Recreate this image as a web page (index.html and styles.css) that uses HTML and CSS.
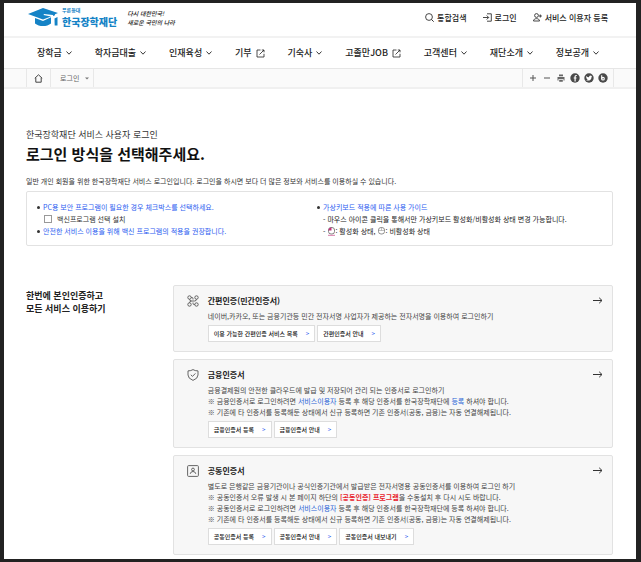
FILE: index.html
```html
<!DOCTYPE html>
<html lang="ko">
<head>
    <meta charset="UTF-8">
    <meta name="viewport" content="width=device-width, initial-scale=1">
    <title>로그인 - 한국장학재단</title>
    <link rel="stylesheet" href="styles.css">
</head>
<body>

<svg class="symbols" width="0" height="0" aria-hidden="true">
    <symbol id="chevron" viewBox="0 0 6 4"><path d="M.5 .5 3 3.200 5.500 .5" fill="none" stroke="currentColor" stroke-width=".9"/></symbol>
    <symbol id="external" viewBox="0 0 9 9"><path d="M4.500 1H1v7h7V4.800M5.800 1H8v2.300M8 1 3.500 5.500" fill="none" stroke="currentColor" stroke-width=".8"/></symbol>
    <symbol id="arrow" viewBox="0 0 10 7"><path d="M0 3.500h8.800M6.200 .8 9 3.500 6.200 6.200" fill="none" stroke="currentColor"/></symbol>
</svg>

<header class="header">
    <a class="logo" href="#">
        <svg width="32" height="19" viewBox="0 0 32 19" aria-hidden="true">
            <path d="M0 6 15 0l15 5-3 1.300v1L25 8V7l-9-1-.5 1L23 8.500 15 11.500z" fill="#1583c6"/>
            <path d="M7 10v5.500c4 3.400 12 3.400 16 0V9.300L15 13z" fill="#1583c6"/>
            <path d="M26.500 10.500 29.500 9v8.500h-2.800z" fill="#1583c6"/>
        </svg>
        <span class="logo-text"><small>푸른등대</small><strong>한국장학재단</strong></span>
    </a>
    <p class="slogan">다시 대한민국!<br>새로운 국민의 나라</p>
    <div class="util">
        <button type="button">
            <svg width="9" height="9" viewBox="0 0 9 9" aria-hidden="true"><circle cx="4" cy="4" r="3.400" fill="none" stroke="#333" stroke-width=".9"/><path d="m6.500 6.500 2.200 2.200" stroke="#333"/></svg>
            통합검색
        </button>
        <a href="#">
            <svg width="9" height="9" viewBox="0 0 9 9" aria-hidden="true"><path d="M4 .8h4.300v7.400H4M0 4.500h5.600M3.700 2.500l2 2-2 2" fill="none" stroke="#333" stroke-width=".9"/></svg>
            로그인
        </a>
        <a href="#">
            <svg width="9" height="9" viewBox="0 0 9 9" aria-hidden="true"><circle cx="3.500" cy="2.500" r="1.900" fill="none" stroke="#333" stroke-width=".9"/><path d="M.5 8C.5 4.800 6.500 4.800 6.500 8zM7.300 1.500v3M5.900 3h3" fill="none" stroke="#333" stroke-width=".9"/></svg>
            서비스 이용자 등록
        </a>
    </div>
</header>

<nav class="gnb">
    <button type="button">장학금 <svg class="chevron"><use href="#chevron"/></svg></button>
    <button type="button">학자금대출 <svg class="chevron"><use href="#chevron"/></svg></button>
    <button type="button">인재육성 <svg class="chevron"><use href="#chevron"/></svg></button>
    <a href="#">기부 <svg class="external"><use href="#external"/></svg></a>
    <button type="button">기숙사 <svg class="chevron"><use href="#chevron"/></svg></button>
    <a href="#">고졸만JOB <svg class="external"><use href="#external"/></svg></a>
    <button type="button">고객센터 <svg class="chevron"><use href="#chevron"/></svg></button>
    <button type="button">재단소개 <svg class="chevron"><use href="#chevron"/></svg></button>
    <button type="button">정보공개 <svg class="chevron"><use href="#chevron"/></svg></button>
</nav>

<div class="location">
    <a class="home" href="#" aria-label="홈">
        <svg width="9" height="9" viewBox="0 0 9 9" aria-hidden="true"><path d="M.8 4.300 4.500 .8l3.700 3.500M1.800 3.800v4.400h5.400V3.800" fill="none" stroke="#444"/></svg>
    </a>
    <div class="depth">
        <select aria-label="현재 메뉴"><option>로그인</option></select>
        <svg width="4" height="3" viewBox="0 0 4 3" aria-hidden="true"><path d="M0 .5h4l-2 2z" fill="#777"/></svg>
    </div>
    <div class="tools">
        <button type="button" aria-label="확대"><svg viewBox="0 0 10 10"><path d="M5 2v6M2 5h6" stroke="#555"/></svg></button>
        <button type="button" aria-label="축소"><svg viewBox="0 0 10 10"><path d="M2 5h6" stroke="#555"/></svg></button>
        <button type="button" aria-label="인쇄"><svg viewBox="0 0 10 10"><path d="M3 1.500h4v1.700H3zM1.500 4h7v3.500H7.500V6h-5v1.500h-1zM3.200 6.800h3.600v2H3.200z" fill="#666"/></svg></button>
        <a href="#" aria-label="페이스북"><svg viewBox="0 0 10 10"><circle cx="5" cy="5" r="4.700" fill="#4a4a4a"/><path d="M6.800 2.500H6q-.9 0-.9 1v5M3.700 5h2.800" fill="none" stroke="#fff" stroke-width="1.200"/></svg></a>
        <a href="#" aria-label="트위터"><svg viewBox="0 0 10 10"><circle cx="5" cy="5" r="4.700" fill="#4a4a4a"/><path d="M2.300 3Q3.500 4.300 5 4.200 5 2.500 6.400 2.500q.6 0 1 .4l.8-.2-.6 1C7.600 7.500 4 8.400 2 7q1.200 0 1.700-.6-1-.3-1.200-1.200Q2 4 2.300 3z" fill="#fff"/></svg></a>
        <a href="#" aria-label="블로그"><svg viewBox="0 0 10 10"><circle cx="5" cy="5" r="4.700" fill="#4a4a4a"/><path d="M3.700 2.300v4" stroke="#fff" stroke-width="1.100"/><circle cx="5" cy="5.700" r="1.300" fill="none" stroke="#fff" stroke-width="1.100"/></svg></a>
    </div>
</div>

<main class="content">
    <p class="sub-title">한국장학재단 서비스 사용자 로그인</p>
    <h1>로그인 방식을 선택해주세요.</h1>
    <p class="intro">일반 개인 회원을 위한 한국장학재단 서비스 로그인입니다. 로그인을 하시면 보다 더 많은 정보와 서비스를 이용하실 수 있습니다.</p>

    <div class="guide">
        <ul>
            <li class="dot">PC용 보안 프로그램이 필요한 경우 체크박스를 선택하세요.</li>
            <li class="check"><input type="checkbox" id="vaccine"><label for="vaccine">백신프로그램 선택 설치</label></li>
            <li class="dot">안전한 서비스 이용을 위해 백신 프로그램의 적용을 권장합니다.</li>
        </ul>
        <ul>
            <li class="dot">가상키보드 적용에 따른 사용 가이드</li>
            <li class="dash">- 마우스 아이콘 클릭을 통해서만 가상키보드 활성화/비활성화 상태 변경 가능합니다.</li>
            <li class="dash">-
                <span class="state"><svg class="mouse" viewBox="0 0 7 9" aria-hidden="true"><rect x=".5" y=".5" width="6" height="6.500" rx="2.500" fill="#fff" stroke="#666" stroke-width=".8"/><path d="M3.500 .5v3h-3Q.5 .5 3.500 .5z" fill="#c2347c"/><path d="M0 8.300h7" stroke="#d678a8"/></svg>: 활성화 상태,</span>
                <span class="state"><svg class="mouse" viewBox="0 0 7 9" aria-hidden="true"><rect x=".5" y=".5" width="6" height="6.500" rx="2.500" fill="#fff" stroke="#777" stroke-width=".8"/><path d="M.5 3.500h6M3.500 .5v3" stroke="#999" stroke-width=".6"/></svg>: 비활성화 상태</span>
            </li>
        </ul>
    </div>

    <section class="login">
        <h2>한번에 본인인증하고<br>모든 서비스 이용하기</h2>
        <div class="cards">
            <article class="card">
                <svg class="card-icon" viewBox="0 0 12 12" aria-hidden="true"><g fill="none" stroke="#555" stroke-width=".9"><circle cx="2.500" cy="2.500" r="1.700"/><circle cx="9.500" cy="2.500" r="1.700"/><circle cx="2.500" cy="9.500" r="1.700"/><circle cx="9.500" cy="9.500" r="1.700"/><path d="M4.200 2.500H5q1 0 1 1.200v.8M2.500 4.200Q2.500 6 4.500 6h3q2 0 2-1.800M2.500 7.800Q2.500 6 4.500 6M7.800 9.500H7q-1 0-1-1.200v-.8"/></g></svg>
                <div class="card-body">
                    <h3>간편인증(민간인증서)</h3>
                    <p>네이버,카카오, 또는 금융기관등 민간 전자서명 사업자가 제공하는 전자서명을 이용하여 로그인하기</p>
                    <div class="links">
                        <a href="#">이용 가능한 간편인증 서비스 목록<span>&gt;</span></a>
                        <a href="#">간편인증서 안내<span>&gt;</span></a>
                    </div>
                </div>
                <a class="go" href="#" aria-label="간편인증 로그인"><svg><use href="#arrow"/></svg></a>
            </article>

            <article class="card">
                <svg class="card-icon" viewBox="0 0 12 12" aria-hidden="true"><path d="M6 .6Q8 1.900 11 1.900V6q0 3.500-5 5.400Q1 9.500 1 6V1.900Q4 1.900 6 .6zM3.800 5.800l1.700 1.600 2.900-3" fill="none" stroke="#555" stroke-width=".9"/></svg>
                <div class="card-body">
                    <h3>금융인증서</h3>
                    <p>금융결제원의 안전한 클라우드에 발급 및 저장되어 관리 되는 인증서로 로그인하기</p>
                    <p>※ 금융인증서로 로그인하려면 <a href="#">서비스이용자</a> 등록 후 해당 인증서를 한국장학재단에 <a href="#">등록</a> 하셔야 합니다.</p>
                    <p>※ 기존에 타 인증서를 등록해둔 상태에서 신규 등록하면 기존 인증서(공동, 금융)는 자동 연결해제됩니다.</p>
                    <div class="links">
                        <a href="#">금융인증서 등록<span>&gt;</span></a>
                        <a href="#">금융인증서 안내<span>&gt;</span></a>
                    </div>
                </div>
                <a class="go" href="#" aria-label="금융인증서 로그인"><svg><use href="#arrow"/></svg></a>
            </article>

            <article class="card">
                <svg class="card-icon" viewBox="0 0 12 12" aria-hidden="true"><rect x=".6" y=".6" width="10.800" height="10.800" rx="1" fill="none" stroke="#666"/><circle cx="6" cy="4.500" r="1.400" fill="none" stroke="#555" stroke-width=".9"/><path d="M3.400 9V8.500q.3-2 2.600-2t2.600 2V9" fill="none" stroke="#555" stroke-width=".9"/></svg>
                <div class="card-body">
                    <h3>공동인증서</h3>
                    <p>별도로 은행같은 금융기관이나 공식인증기관에서 발급받은 전자서명용 공동인증서를 이용하여 로그인 하기</p>
                    <p>※ 공동인증서 오류 발생 시 본 페이지 하단의 <strong>[공동인증] 프로그램</strong>을 수동설치 후 다시 시도 바랍니다.</p>
                    <p>※ 공동인증서로 로그인하려면 <a href="#">서비스이용자</a> 등록 후 해당 인증서를 한국장학재단에 등록 하셔야 합니다.</p>
                    <p>※ 기존에 타 인증서를 등록해둔 상태에서 신규 등록하면 기존 인증서(공동, 금융)는 자동 연결해제됩니다.</p>
                    <div class="links">
                        <a href="#">공동인증서 등록<span>&gt;</span></a>
                        <a href="#">공동인증서 안내<span>&gt;</span></a>
                        <a href="#">공동인증서 내보내기<span>&gt;</span></a>
                    </div>
                </div>
                <a class="go" href="#" aria-label="공동인증서 로그인"><svg><use href="#arrow"/></svg></a>
            </article>
        </div>
    </section>
</main>

</body>
</html>
```
FILE: styles.css
```css
* {
    box-sizing: border-box;
}
body {
    margin: 0;
    min-height: 100vh;
    border: solid #222;
    border-width: 3px 5px 3px 4px;
    background-color: #fff;
    color: #333;
    font-family: "Noto Sans CJK KR", sans-serif;
    font-size: 7px;
    line-height: 11px;
}
h1, h2, h3, p, ul {
    margin: 0;
    padding: 0;
}
ul {
    list-style: none;
}
a {
    color: inherit;
    text-decoration: none;
}
button, select {
    margin: 0;
    padding: 0;
    border: 0;
    background: none;
    color: inherit;
    font: inherit;
}
svg {
    display: block;
    flex: none;
}
.symbols {
    position: absolute;
}

/* header */
.header {
    display: flex;
    align-items: center;
    height: 35px;
    padding: 0 28px 4px 24px;
    border-bottom: 2px solid #f2f2f2;
}
.logo {
    display: flex;
    align-items: center;
    gap: 2px;
    color: #1583c6;
}
.logo-text {
    display: flex;
    flex-direction: column;
}
.logo small {
    font-size: 5px;
    font-weight: bold;
    line-height: 8px;
}
.logo strong {
    font-size: 10px;
    font-weight: 900;
    line-height: 15px;
}
.slogan {
    margin-left: 10px;
    color: #222;
    font-size: 6px;
    font-style: italic;
    font-weight: 500;
    line-height: 9px;
}
.util {
    display: flex;
    gap: 16px;
    margin-left: auto;
    color: #222;
    font-size: 8px;
    font-weight: 500;
    line-height: 12px;
}
.util a, .util button {
    display: flex;
    align-items: center;
    gap: 3px;
}

/* main menu */
.gnb {
    display: flex;
    align-items: center;
    justify-content: space-between;
    height: 31px;
    padding: 0 37px 0 33px;
    border-bottom: 1px solid #e6e6e6;
    color: #222;
    font-size: 9px;
    font-weight: 500;
    line-height: 14px;
}
.gnb a, .gnb button {
    display: flex;
    align-items: center;
    gap: 4px;
}
.chevron {
    width: 6px;
    height: 4px;
}
.external {
    width: 9px;
    height: 9px;
}

/* location bar */
.location {
    display: flex;
    height: 20px;
    padding: 0 22px;
    border-bottom: 2px solid #f0f0f0;
    background-color: #fafafa;
}
.home, .depth, .tools {
    display: flex;
    align-items: center;
    border-right: 1px solid #e8e8e8;
}
.home {
    padding: 0 7px;
    border-left: 1px solid #e8e8e8;
}
.depth {
    gap: 5px;
    padding: 0 4px 0 9px;
    color: #666;
}
.depth select {
    appearance: none;
}
.tools {
    gap: 4px;
    margin-left: auto;
    padding: 0 5px;
    border-left: 1px solid #e8e8e8;
}
.tools svg {
    width: 10px;
    height: 10px;
}

/* content */
.content {
    padding: 40px 23px 4px 22px;
}
.sub-title {
    font-size: 9px;
    line-height: 12px;
}
h1 {
    margin-top: 2px;
    color: #111;
    font-size: 15px;
    line-height: 22px;
}
.intro {
    margin-top: 11px;
}
.guide {
    display: grid;
    grid-template-columns: 280px 1fr;
    margin-top: 4px;
    padding: 9px 10px 8px;
    border: 1px solid #e2e2e2;
    border-radius: 2px;
    line-height: 12px;
}
.guide li {
    display: flex;
    align-items: center;
}
.guide .dot {
    gap: 3px;
    color: #2b5cf0;
}
.dot::before {
    content: "";
    width: 3px;
    height: 3px;
    border-radius: 50%;
    background-color: #333;
}
.guide .dash {
    gap: 3px;
    padding-left: 6px;
    color: #222;
}
.guide .check {
    gap: 5px;
    padding-left: 7px;
}
.check input {
    appearance: none;
    width: 8px;
    height: 8px;
    margin: 0;
    border: 1px solid #999;
    background-color: #fff;
}
.check input:checked {
    background-color: #2b5cf0;
}
.state {
    display: flex;
    align-items: center;
}
.mouse {
    width: 7px;
    height: 9px;
}

/* login methods */
.login {
    display: grid;
    grid-template-columns: 1fr 3fr;
    margin-top: 39px;
}
h2 {
    padding-top: 4px;
    color: #222;
    font-size: 9px;
    line-height: 13px;
}
.cards {
    display: flex;
    flex-direction: column;
    gap: 7px;
}
.card {
    display: flex;
    align-items: flex-start;
    gap: 9px;
    padding: 9px 9px 9px 13px;
    border: 1px solid #e2e2e2;
    border-radius: 2px;
    background-color: #f7f7f7;
}
.card-icon {
    width: 12px;
    height: 12px;
}
.card-body {
    flex: 1;
}
h3 {
    margin-bottom: 4px;
    color: #222;
    font-size: 8px;
    line-height: 12px;
}
.card p {
    color: #444;
}
.card p a {
    color: #1f63d6;
}
.card p strong {
    color: #e8202a;
}
.links {
    display: flex;
    gap: 2px;
    margin-top: 3px;
}
.links a {
    display: flex;
    gap: 8px;
    padding: 2px 5px;
    border: 1px solid #ddd;
    background-color: #fff;
    color: #111;
    font-size: 6px;
    font-weight: 500;
    line-height: 11px;
}
.links span {
    color: #2b5cf0;
}
.go {
    padding-top: 2px;
    color: #333;
}
.go svg {
    width: 10px;
    height: 7px;
}
```
